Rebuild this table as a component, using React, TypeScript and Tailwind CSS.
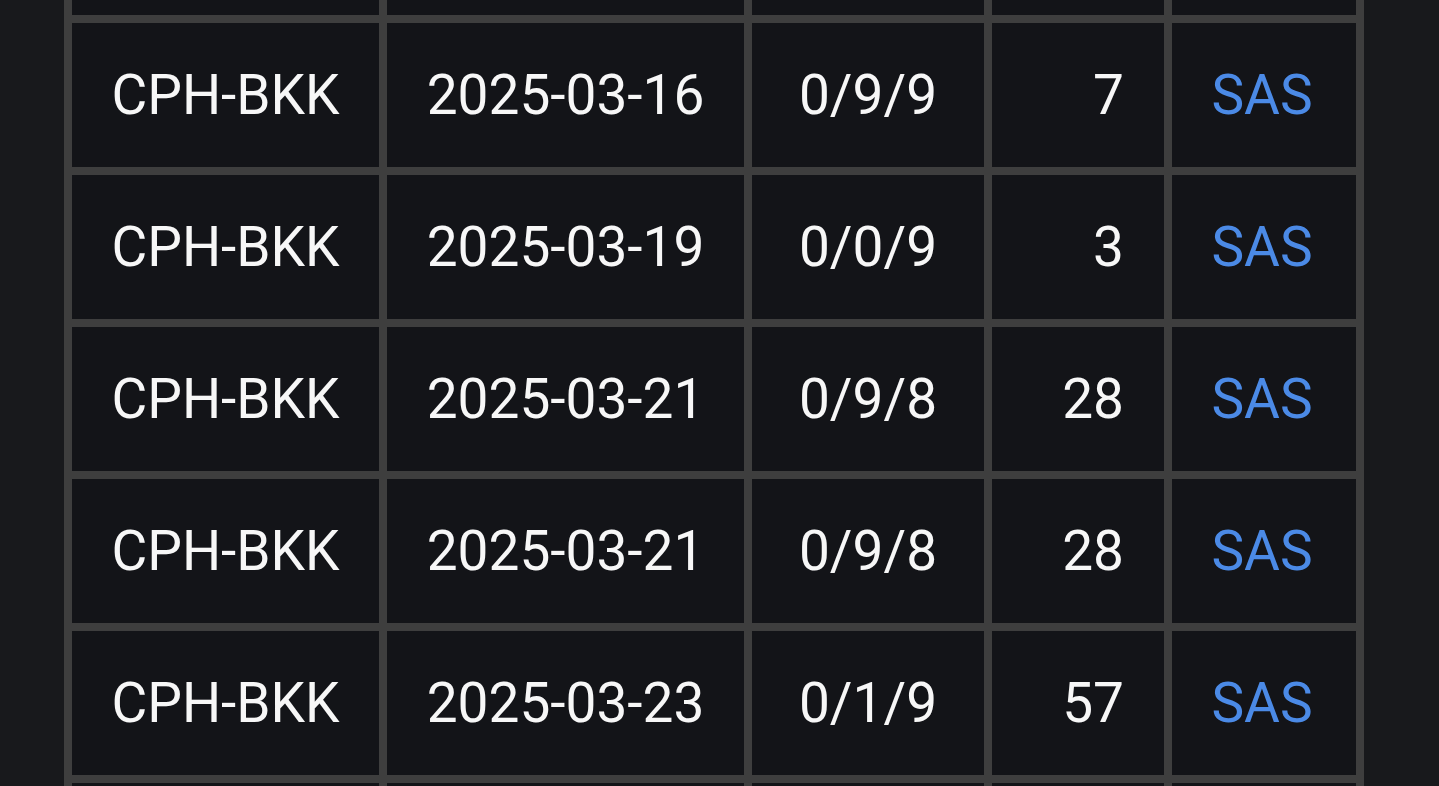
import React from "react";

const rows = [
  ["", "", "", "", ""],
  ["CPH-BKK", "2025-03-16", "0/9/9", "7", "SAS"],
  ["CPH-BKK", "2025-03-19", "0/0/9", "3", "SAS"],
  ["CPH-BKK", "2025-03-21", "0/9/8", "28", "SAS"],
  ["CPH-BKK", "2025-03-21", "0/9/8", "28", "SAS"],
  ["CPH-BKK", "2025-03-23", "0/1/9", "57", "SAS"],
  ["", "", "", "", ""],
];

export default function App() {
  return (
    <div className="h-[786px] w-full overflow-hidden bg-[#18191c] pl-16 font-['Roboto',sans-serif]">
      <div className="mt-[-137px] grid w-[1300px] grid-cols-[307px_357px_232px_172px_184px] gap-2 bg-[#3e3e3e] p-2 text-[55px] leading-none text-[#f7f7f7]">
        {rows.map((r, i) => (
          <React.Fragment key={i}>
            <div className="flex h-[144px] items-center justify-center bg-[#131418]">{r[0]}</div>
            <div className="flex h-[144px] items-center justify-center bg-[#131418]">{r[1]}</div>
            <div className="flex h-[144px] items-center justify-center bg-[#131418]">{r[2]}</div>
            <div className="flex h-[144px] items-center justify-end bg-[#131418] pr-[40px]">{r[3]}</div>
            <div className="flex h-[144px] items-center justify-center bg-[#131418] pr-[4px] text-[#4b8ae6]">{r[4]}</div>
          </React.Fragment>
        ))}
      </div>
    </div>
  );
}
